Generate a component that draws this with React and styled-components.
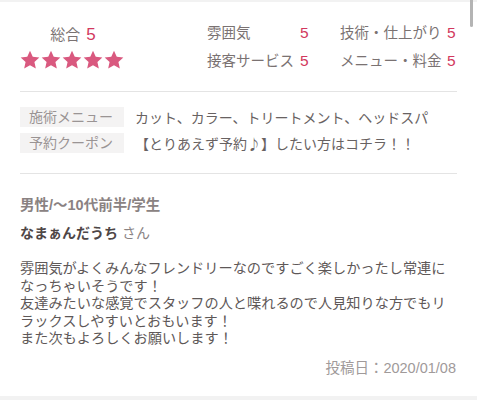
import React from 'react'
import styled, {createGlobalStyle} from 'styled-components'

const GlobalStyle = createGlobalStyle`
	html, body{
		margin: 0;
		padding: 0;
		background: #f2f2f2;
	}
	body{
		font-family: "Liberation Sans", "Noto Sans CJK JP", sans-serif;
		font-size: 14px;
		color: #5a5454;
		-webkit-font-smoothing: antialiased;
	}
`

const Page = styled.div`
	position: relative;
	width: 477px;
	height: 400px;
	overflow: hidden;
	padding-top: 2px;
	box-sizing: border-box;
`

const ScrollThumb = styled.div`
	position: absolute;
	top: -3px;
	right: 4px;
	width: 3px;
	height: 30px;
	border-radius: 2px;
	background: #b4b4b4;
`

const Card = styled.div`
	background: #fff;
	padding: 0 20px;
	height: 394px;
	box-sizing: border-box;
`

const RatingSection = styled.div`
	display: flex;
	padding: 21px 0 20px;
	border-bottom: 1px solid #e4e4e4;
`

const Overall = styled.div`
	width: 106px;
	text-align: center;
`

const OverallLabel = styled.div`
	margin-top: 2px;
	line-height: 20px;
	font-size: 15px;
	color: #7a7272;
`

const Score = styled.span`
	color: #d2385e;
	font-size: ${p => p.$big ? '17px' : '15.5px'};
	margin-left: ${p => p.$big ? '6px' : '0'};
`

const Stars = styled.div`
	display: flex;
	gap: 1px;
	margin-top: 5px;
	margin-left: 0;
`

const Details = styled.div`
	margin-left: 81px;
	display: grid;
	grid-template-columns: 93px 40px 107px auto;
	row-gap: 8px;
	line-height: 20px;
	font-size: 14.5px;
	color: #7a7272;
`

const MenuSection = styled.div`
	padding: 15px 0 20px;
	border-bottom: 1px solid #e4e4e4;
	display: flex;
	flex-direction: column;
	gap: 6px;
`

const MenuRow = styled.div`
	display: flex;
	align-items: center;
	line-height: 20px;
`

const Tag = styled.span`
	width: 104px;
	box-sizing: border-box;
	padding-left: 9px;
	background: #f4f3f3;
	color: #9a9494;
	font-size: 14px;
	white-space: nowrap;
`

const MenuValue = styled.span`
	margin-left: 11px;
	color: #686262;
	font-family: "Noto Sans CJK JP", sans-serif;
	font-size: 14px;
	white-space: nowrap;
`

const Review = styled.div`
	padding-top: 21px;
`

const Profile = styled.div`
	line-height: 20px;
	font-size: 14.5px;
	font-weight: 700;
	color: #8a8282;
`

const Name = styled.div`
	margin-top: 8px;
	line-height: 20px;
	font-size: 14px;
	font-weight: 700;
	color: #4e4646;

	span{
		font-weight: 400;
		color: #8a8383;
		margin-left: 4px;
	}
`

const Body = styled.p`
	margin: 17px 0 0;
	width: 432px;
	font-size: 14.2px;
	line-height: 17.5px;
	color: #5e5858;
	word-break: break-all;
`

const PostedAt = styled.div`
	margin-top: 10px;
	text-align: right;
	line-height: 20px;
	font-size: 14.5px;
	color: #a09a9a;
	padding-right: 1px;
`

const Star = () => (
	<svg width="20" height="20" viewBox="0 0 24 24">
		<path fill="#d9597f" d="M12 1l3.3 7.2 7.9.8-5.9 5.4 1.7 7.8L12 18.2l-7 4 1.7-7.8L.8 9l7.9-.8z"/>
	</svg>
)

const details = [
	['雰囲気', 5], ['技術・仕上がり', 5],
	['接客サービス', 5], ['メニュー・料金', 5],
]

const App = () => (
	<Page>
		<GlobalStyle/>
		<ScrollThumb/>
		<Card>
			<RatingSection>
				<Overall>
					<OverallLabel>総合<Score $big>5</Score></OverallLabel>
					<Stars>
						{[0,1,2,3,4].map(i => <Star key={i}/>)}
					</Stars>
				</Overall>
				<Details>
					{details.map(([label, score]) => (
						<React.Fragment key={label}>
							<span>{label}</span>
							<Score>{score}</Score>
						</React.Fragment>
					))}
				</Details>
			</RatingSection>

			<MenuSection>
				<MenuRow>
					<Tag>施術メニュー</Tag>
					<MenuValue>カット、カラー、トリートメント、ヘッドスパ</MenuValue>
				</MenuRow>
				<MenuRow>
					<Tag>予約クーポン</Tag>
					<MenuValue>【とりあえず予約♪】したい方はコチラ！！</MenuValue>
				</MenuRow>
			</MenuSection>

			<Review>
				<Profile>男性/〜10代前半/学生</Profile>
				<Name>なまぁんだうち<span>さん</span></Name>
				<Body>
					雰囲気がよくみんなフレンドリーなのですごく楽しかったし常連になっちゃいそうです！<br/>
					友達みたいな感覚でスタッフの人と喋れるので人見知りな方でもリラックスしやすいとおもいます！<br/>
					また次もよろしくお願いします！
				</Body>
				<PostedAt>投稿日：2020/01/08</PostedAt>
			</Review>
		</Card>
	</Page>
)

export default App
